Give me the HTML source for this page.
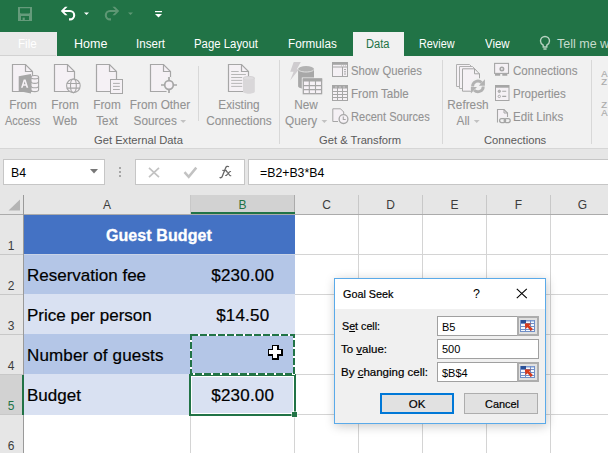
<!DOCTYPE html>
<html><head><meta charset="utf-8">
<style>
*{margin:0;padding:0;box-sizing:border-box}
html,body{width:608px;height:453px;overflow:hidden;background:#fff;font-family:"Liberation Sans",sans-serif;-webkit-font-smoothing:antialiased}
.a{position:absolute}
svg{position:absolute;overflow:visible}
.tab{position:absolute;top:32px;height:24px;font-size:12.5px;color:#fff;line-height:25px;white-space:nowrap}
.rl{position:absolute;font-size:12.2px;color:#939393;-webkit-text-stroke:0.1px #939393;transform:scaleX(0.967);white-space:nowrap;text-align:center;line-height:16px}
.sl{position:absolute;font-size:12.2px;color:#939393;-webkit-text-stroke:0.1px #939393;transform:scaleX(0.951);transform-origin:0 0;white-space:nowrap;line-height:14px}
.gl{position:absolute;font-size:11.2px;color:#5a5a5a;white-space:nowrap;line-height:14px}
.dd{display:inline-block;width:0;height:0;border-left:3px solid transparent;border-right:3px solid transparent;border-top:3px solid #c2c2c2;-webkit-text-stroke:0;margin-left:4px;vertical-align:2px}
.sep{position:absolute;top:60px;width:1px;height:84px;background:#d8d8d8}
.cell{position:absolute;font-size:17px;color:#000;white-space:nowrap;line-height:20px;-webkit-text-stroke:0.2px #000}
.ch{position:absolute;top:195px;height:19px;font-size:12px;color:#3c3c3c;text-align:center;line-height:20px;border-right:1px solid #c8c8c8}
.rh{position:absolute;left:0;width:23px;font-size:12px;color:#3c3c3c;text-align:center;border-bottom:1px solid #c8c8c8}
.rh span{position:absolute;left:0;width:22px;bottom:1px;line-height:14px}
.dl{position:absolute;font-size:11.5px;color:#000;white-space:nowrap;line-height:14px;-webkit-text-stroke:0.2px #000}
.inp{position:absolute;background:#fff;border:1px solid #a0a0a0;font-size:11px;line-height:20px;padding-left:4px;color:#000}
.refb{position:absolute;width:22px;height:20px;background:#e1e1e1;border:2px solid #adadad}
</style></head><body>
<!-- title bar + tabs -->
<div class="a" style="left:0;top:0;width:608px;height:56px;background:#217346"></div>
<!-- QAT -->
<svg style="left:0;top:0" width="200" height="32">
  <rect x="18" y="7" width="14" height="14" fill="#659b7b"/>
  <path d="M20 8.2h10v4.6l-0.8 0.8h-8.4l-0.8-0.8z" fill="#217346"/>
  <rect x="21" y="16" width="8" height="4" fill="#217346"/>
  <rect x="22.6" y="17.6" width="2.2" height="2.4" fill="#659b7b"/>
  <path d="M63 11h7a4.2 4.2 0 0 1 0 8.4h-1" fill="none" stroke="#fff" stroke-width="2.1"/>
  <path d="M60.8 11l4.2-4.2h2.6l-4.2 4.2 4.2 4.2h-2.6z" fill="#fff"/>
  <path d="M84 12.5h5l-2.5 2.5z" fill="#fff"/>
  <path d="M117 11h-7a4.2 4.2 0 0 0 0 8.4h1" fill="none" stroke="#5e9774" stroke-width="2.1"/>
  <path d="M119.2 11l-4.2-4.2h-2.6l4.2 4.2-4.2 4.2h2.6z" fill="#5e9774"/>
  <path d="M128 12.5h5l-2.5 2.5z" fill="#5e9774"/>
  <rect x="155" y="11" width="7" height="1.2" fill="#fff"/>
  <path d="M155 14h7l-3.5 3.5z" fill="#fff"/>
</svg>
<!-- File tab -->
<div class="a" style="left:0;top:32px;width:57px;height:24px;background:#e9e9e9"></div>
<div class="tab" style="left:18px;color:#fff;transform:scaleX(0.93);transform-origin:0 0">File</div>
<div class="a" style="left:0;top:55px;width:56px;height:1px;background:#d2d2d2"></div>
<div class="tab" style="left:74px">Home</div>
<div class="tab" style="left:136px;transform:scaleX(0.926);transform-origin:0 0">Insert</div>
<div class="tab" style="left:194px;transform:scaleX(0.91);transform-origin:0 0">Page Layout</div>
<div class="tab" style="left:288px;transform:scaleX(0.936);transform-origin:0 0">Formulas</div>
<div class="a" style="left:353px;top:32px;width:51px;height:24px;background:#f1f1f1"></div>
<div class="tab" style="left:366px;color:#217346;transform:scaleX(0.89);transform-origin:0 0">Data</div>
<div class="tab" style="left:419px;transform:scaleX(0.867);transform-origin:0 0">Review</div>
<div class="tab" style="left:485px;transform:scaleX(0.915);transform-origin:0 0">View</div>
<svg style="left:538px;top:35px" width="14" height="16">
  <path d="M5.2 12v-1.8C3.6 9.2 2.5 7.8 2.5 6a4.5 4.5 0 0 1 9 0c0 1.8-1.1 3.2-2.7 4.2V12z M5.4 14h3.2" fill="none" stroke="#b8d3c2" stroke-width="1.4"/>
</svg>
<div class="tab" style="left:557px;color:#c6dccd">Tell me w</div>

<!-- ribbon -->
<div class="a" style="left:0;top:56px;width:608px;height:92px;background:#f1f1f1"></div>
<div class="a" style="left:0;top:148px;width:608px;height:1px;background:#d6d6d6"></div>

<!-- big icons -->
<svg style="left:0;top:56px" width="330" height="40">
  <defs>
    <g id="doc"><path d="M0.5 0.5h13l7 7v20h-20z" fill="#f5f1f5" stroke="#a6a6a6" stroke-width="1.2"/><path d="M13.5 0.5v7h7" fill="none" stroke="#a6a6a6" stroke-width="1.2"/></g>
  </defs>
  <!-- access -->
  <use href="#doc" x="12" y="8"/>
  <path d="M18.7 20.3L31 17.9V37.4L18.7 35z" fill="#a6a6a6"/>
  <path fill-rule="evenodd" d="M21 31.8L23.7 23.5h1.9L28.3 31.8h-1.8l-0.6-2h-2.6l-0.6 2zM23.8 28.3h1.7l-0.85-3z" fill="#f5f1f5"/>
  <g fill="#f5f1f5" stroke="#a6a6a6" stroke-width="1.1">
    <path d="M31 21.2v12.6c0 1 1.7 1.8 3.8 1.8s3.8-.8 3.8-1.8V21.2"/>
    <ellipse cx="34.8" cy="21.2" rx="3.8" ry="1.7"/>
    <path d="M31 25.6c0 1 1.7 1.8 3.8 1.8s3.8-.8 3.8-1.8M31 30c0 1 1.7 1.8 3.8 1.8s3.8-.8 3.8-1.8" fill="none"/>
  </g>
  <!-- web -->
  <use href="#doc" x="54" y="8"/>
  <g fill="#f5f1f5" stroke="#a6a6a6" stroke-width="1.1">
    <circle cx="73.4" cy="29.8" r="6.8"/>
    <ellipse cx="73.4" cy="29.8" rx="2.9" ry="6.8" fill="none"/>
    <path d="M66.8 27.5h13.2M66.8 32.1h13.2" fill="none"/>
  </g>
  <!-- text -->
  <use href="#doc" x="96" y="8"/>
  <rect x="110.5" y="23.5" width="12" height="14" fill="#f5f1f5" stroke="#a6a6a6"/>
  <path d="M113 27.4h6.8M113 30.4h6.8M113 33.5h6.8" stroke="#a6a6a6" stroke-width="0.9"/>
  <!-- other sources -->
  <use href="#doc" x="150" y="8"/>
  <g stroke="#f1f1f1" stroke-width="4.5" fill="none">
    <circle cx="169" cy="29" r="4.6"/>
    <path d="M169 21v16M161 29h16"/>
  </g>
  <g stroke="#a6a6a6" stroke-width="1.7" fill="none">
    <circle cx="169" cy="29" r="4.3" fill="#f5f1f5"/>
    <path d="M169 21v3.5M169 33.5v3.5M161 29h3.5M173.5 29h3.5"/>
  </g>
  <!-- existing connections -->
  <use href="#doc" x="228" y="8"/>
  <path d="M231.2 15.5h7.5M231.2 18.5h14.7M231.2 21.5h11M231.2 24.4h11M231.2 27.4h11M231.2 30.4h11" stroke="#b0b0b0" stroke-width="0.9"/>
  <g fill="#d9d7d9" stroke="none">
    <path d="M243 22v13.5c0 1.3 2.6 2.2 5.9 2.2s5.9-.9 5.9-2.2V22z"/>
    <ellipse cx="248.9" cy="22" rx="5.9" ry="2.1" fill="#d0cdd0"/>
    <ellipse cx="248.9" cy="22.3" rx="5" ry="1.5" fill="#dedcde"/>
  </g>
  <!-- new query -->
  <path d="M293.7 6H300.8L296.8 13.2H299L290.2 24.5L293.6 15.8H290.2z" fill="#cfcccf"/>
  <g fill="#a8a8a8">
    <path d="M298.1 13v17.2c0 1.5 3.6 2.6 7.95 2.6s7.95-1.1 7.95-2.6V13z"/>
    <ellipse cx="306.05" cy="13" rx="7.95" ry="3" fill="#b2b2b2"/>
    <path d="M298.1 13.2c0 1.6 3.6 2.8 7.95 2.8s7.95-1.2 7.95-2.8" fill="none" stroke="#e8e8e8" stroke-width="0.9"/>
  </g>
  <rect x="301.8" y="21.5" width="21.3" height="17.7" fill="#f1f1f1"/>
  <rect x="303.3" y="23" width="18.3" height="14.7" fill="#f7f2f7" stroke="#a6a6a6" stroke-width="1.3"/>
  <rect x="302.8" y="22.5" width="19.3" height="3" fill="#a6a6a6"/>
  <path d="M303 29.6h18.6M303 33.6h18.6M309.3 25v12.5M315.5 25v12.5" stroke="#a6a6a6" stroke-width="1.1"/>
</svg>

<div class="rl" style="left:0;top:97px;width:46px">From<br><span style="display:inline-block;transform:scaleX(0.93)">Access</span></div>
<div class="rl" style="left:45px;top:97px;width:40px">From<br>Web</div>
<div class="rl" style="left:87px;top:97px;width:40px">From<br>Text</div>
<div class="rl" style="left:125px;top:97px;width:70px">From Other<br>Sources<i class="dd"></i></div>
<div class="gl" style="left:94px;top:133px">Get External Data</div>
<div class="sep" style="left:198px;top:66px;height:55px"></div>
<div class="rl" style="left:202px;top:97px;width:74px">Existing<br>Connections</div>
<div class="sep" style="left:279px"></div>
<div class="rl" style="left:283px;top:97px;width:46px">New<br>Query<i class="dd"></i></div>

<!-- small buttons get & transform -->
<svg style="left:330px;top:56px" width="280" height="92">
  <!-- show queries -->
  <rect x="2.5" y="6.5" width="15" height="14" fill="#f5f1f5" stroke="#a6a6a6"/>
  <rect x="2.5" y="6.5" width="15" height="2.3" fill="#a6a6a6"/>
  <path d="M2.5 11h15M12.5 11v9.5M14 13.6h2M14 15.8h2M14 18h2" stroke="#a6a6a6"/>
  <path d="M11 9.8h1M13 9.8h1M15 9.8h1" stroke="#b8b8b8" stroke-width="0.8"/>
  <!-- from table -->
  <rect x="2.5" y="29.5" width="15" height="15" fill="#f5f1f5" stroke="#a6a6a6"/>
  <rect x="2.5" y="29.5" width="15" height="3" fill="#a6a6a6"/>
  <path d="M5.5 31h1M9.5 31h1M13.5 31h1" stroke="#f5f1f5" stroke-width="1"/>
  <path d="M2.5 35.5h15M2.5 38.5h15M2.5 41.5h15M7.5 32v12.5M12.5 32v12.5" stroke="#a6a6a6"/>
  <!-- recent sources -->
  <path d="M10.5 52.8v3.2h3.2" fill="none" stroke="#a6a6a6"/>
  <path d="M8 65.5H2.8V52.8h7.7l3.2 3.2v2.2" fill="#f5f1f5" stroke="#a6a6a6"/>
  <circle cx="13.5" cy="63.1" r="4.4" fill="#f5f1f5" stroke="#a6a6a6" stroke-width="1.3"/>
  <path d="M13.3 60.6v2.9h2.4" fill="none" stroke="#a6a6a6" stroke-width="1.1"/>
  <!-- separator right of get&transform at x=442 -->
  <!-- refresh all -->
  <path d="M126.5 8.5h13l4 4v18h-17z" fill="#f5f1f5" stroke="#b0b0b0"/>
  <path d="M129.5 10.5h13l4 4v18h-17z" fill="#f5f1f5" stroke="#b0b0b0"/>
  <path d="M132.5 12.8h12l5 5v17.4h-17z" fill="#f5f1f5" stroke="#a6a6a6"/>
  <path d="M144.5 12.8v5h5" fill="none" stroke="#a6a6a6"/>
  <circle cx="147.9" cy="30.4" r="8.4" fill="#f1f1f1"/>
  <g fill="none" stroke="#b2b2b2" stroke-width="2.9">
    <path d="M142.55 30.4A5.35 5.35 0 0 1 151.6 26.6"/>
    <path d="M153.25 30.4A5.35 5.35 0 0 1 144.2 34.2"/>
  </g>
  <path d="M148.8 29.8H154.9V23.2z M147 31H140.9V37.6z" fill="#b2b2b2"/>
  <!-- connections small -->
  <rect x="164.6" y="7.4" width="13.9" height="10" fill="#f5f1f5" stroke="#a6a6a6" stroke-width="1.1"/>
  <path d="M165 18.9h5.2M172.3 18.9h5" stroke="#a6a6a6" stroke-width="1.6"/>
  <circle cx="171.9" cy="12.9" r="1.7" fill="none" stroke="#a6a6a6" stroke-width="1.6"/>
  <!-- properties -->
  <rect x="165.5" y="29.5" width="13.5" height="15" fill="#f5f1f5" stroke="#a6a6a6"/>
  <rect x="165.5" y="29.5" width="13.5" height="2.2" fill="#a6a6a6"/>
  <circle cx="169.3" cy="35.3" r="1.2" fill="#b8b8b8" stroke="#a6a6a6" stroke-width="0.9"/>
  <circle cx="169.3" cy="40.4" r="1.2" fill="none" stroke="#a6a6a6" stroke-width="0.9"/>
  <path d="M172.2 35.3h4M172.2 40.4h4" stroke="#a6a6a6" stroke-width="1.1"/>
  <!-- edit links -->
  <path d="M167.5 66.5V53.5h6.5l3.5 3.5v4.5" fill="#f5f1f5" stroke="#a6a6a6" stroke-width="1.1"/>
  <path d="M174 53.5v3.5h3.5" fill="none" stroke="#a6a6a6" stroke-width="1"/>
  <rect x="168" y="61" width="13" height="7" fill="#f1f1f1"/>
  <rect x="169.6" y="62.6" width="6" height="4" rx="2" fill="none" stroke="#a6a6a6" stroke-width="1.3"/>
  <rect x="174.2" y="62.6" width="6" height="4" rx="2" fill="none" stroke="#a6a6a6" stroke-width="1.3"/>
  <g font-size="9.5" fill="#aaaaaa" font-family="Liberation Sans" stroke="#aaaaaa" stroke-width="0.15">
  <text x="271.2" y="20.5">A</text>
  <text x="271.2" y="28.8">Z</text>
  <text x="271.2" y="51.5">Z</text>
  <text x="271.2" y="59.8">A</text>
  </g>
</svg>
<div class="sl" style="left:351px;top:64px;transform:scaleX(0.927)">Show Queries</div>
<div class="sl" style="left:351px;top:87px">From Table</div>
<div class="sl" style="left:351px;top:110px;transform:scaleX(0.908)">Recent Sources</div>
<div class="gl" style="left:319px;top:133px">Get &amp; Transform</div>
<div class="sep" style="left:442px"></div>
<div class="rl" style="left:444px;top:97px;width:48px">Refresh<br>All<i class="dd"></i></div>
<div class="sl" style="left:513px;top:64px">Connections</div>
<div class="sl" style="left:513px;top:87px">Properties</div>
<div class="sl" style="left:513px;top:110px">Edit Links</div>
<div class="gl" style="left:484px;top:133px">Connections</div>
<div class="sep" style="left:591px"></div>

<!-- formula bar area -->
<div class="a" style="left:0;top:149px;width:608px;height:46px;background:#e6e6e6"></div>
<div class="a" style="left:3px;top:159px;width:102px;height:26px;background:#fff;border:1px solid #c6c6c6"></div>
<div class="a" style="left:11px;top:165px;font-size:12.3px;line-height:16px;color:#000">B4</div>
<svg style="left:89px;top:168px" width="10" height="6"><path d="M1 1h8l-4 4.5z" fill="#777"/></svg>
<svg style="left:118px;top:166px" width="4" height="12"><rect x="1" y="1" width="2" height="2" fill="#a6a6a6"/><rect x="1" y="5" width="2" height="2" fill="#a6a6a6"/><rect x="1" y="9" width="2" height="2" fill="#a6a6a6"/></svg>
<div class="a" style="left:135px;top:159px;width:110px;height:26px;background:#fff;border:1px solid #c6c6c6"></div>
<svg style="left:145px;top:165px" width="100" height="16">
  <path d="M4 2.8l10 9.4M14 2.8L4 12.2" stroke="#c2c2c2" stroke-width="1.7"/>
  <path d="M39.5 7.2l4.2 4.6 7.6-9.2" fill="none" stroke="#c2c2c2" stroke-width="2.5"/>
  <path d="M84 1.8C82.6 0.9 81.1 1.3 80.5 3.2L77.2 11.6C76.7 12.8 75.6 13.1 74.6 12.3" fill="none" stroke="#666" stroke-width="1.3"/>
  <path d="M77.3 5.4h4.6" stroke="#666" stroke-width="1.1"/>
  <path d="M80.8 6.8c1.5-.6 2 .2 2.6 1.4l1 1.8c.4.7 1 1 1.8.5M86 6.6c-.7-.3-1.3 0-1.9.8l-2.2 2.5c-.5.6-1.1.8-1.7.5" fill="none" stroke="#666" stroke-width="1.1"/>
</svg>
<div class="a" style="left:248px;top:159px;width:370px;height:26px;background:#fff;border:1px solid #c6c6c6"></div>
<div class="a" style="left:260px;top:165px;font-size:12.3px;line-height:16px;color:#000">=B2+B3*B4</div>

<!-- column headers -->
<div class="a" style="left:0;top:195px;width:608px;height:19px;background:#e6e6e6"></div>
<svg style="left:0;top:195px" width="24" height="19"><path d="M20 4.5v11h-11.5z" fill="#b4b4b4"/></svg>
<div class="ch" style="left:0;width:24px;border-right:1px solid #9a9a9a"></div>
<div class="ch" style="left:24px;width:167px">A</div>
<div class="ch" style="left:191px;width:104px;background:#d2d2d2;color:#217346;border-right:1px solid #ababab">B</div>
<div class="a" style="left:191px;top:212px;width:104px;height:2px;background:#217346"></div>
<div class="ch" style="left:295px;width:64px">C</div>
<div class="ch" style="left:359px;width:64px">D</div>
<div class="ch" style="left:423px;width:64px">E</div>
<div class="ch" style="left:487px;width:64px">F</div>
<div class="ch" style="left:551px;width:64px">G</div>
<div class="a" style="left:0;top:214px;width:608px;height:1px;background:#ababab"></div>

<!-- grid -->
<div class="a" style="left:24px;top:215px;width:584px;height:238px;background:#fff"></div>
<svg style="left:0;top:0" width="608" height="453">
  <g stroke="#d4d4d4" stroke-width="1">
    <path d="M295 254.5h313M295 294.5h313M295 334.5h313M295 374.5h313M295 414.5h313"/>
    <path d="M358.5 215v238M422.5 215v238M486.5 215v238M550.5 215v238M190.5 414v39M294.5 414v39"/>
  </g>
</svg>
<!-- row headers -->
<div class="a" style="left:0;top:215px;width:23px;height:238px;background:#e6e6e6"></div>
<div class="a" style="left:23px;top:195px;width:1px;height:258px;background:#9a9a9a"></div>
<div class="rh" style="top:215px;height:40px"><span>1</span></div>
<div class="rh" style="top:255px;height:40px"><span>2</span></div>
<div class="rh" style="top:295px;height:40px"><span>3</span></div>
<div class="rh" style="top:335px;height:40px"><span>4</span></div>
<div class="rh" style="top:375px;height:40px;background:#d2d2d2;color:#217346"><span>5</span></div>
<div class="a" style="left:22px;top:375px;width:2px;height:40px;background:#217346"></div>
<div class="rh" style="top:415px;height:40px"><span>6</span></div>

<!-- cells -->
<div class="a" style="left:24px;top:215px;width:271px;height:39px;background:#4472c4"></div>
<div class="a" style="left:24px;top:254px;width:271px;height:40px;background:#b4c6e7"></div>
<div class="a" style="left:24px;top:294px;width:271px;height:40px;background:#d9e1f2"></div>
<div class="a" style="left:24px;top:334px;width:271px;height:40px;background:#b4c6e7"></div>
<div class="a" style="left:24px;top:374px;width:271px;height:41px;background:#d9e1f2"></div>
<div class="a" style="left:24px;top:254px;width:271px;height:1px;background:#c9d3e6"></div>
<div class="cell" style="left:24px;top:226px;width:271px;text-align:center;font-weight:bold;color:#fff;font-size:16px;letter-spacing:0.1px;-webkit-text-stroke:0.3px #fff;padding-right:1px">Guest Budget</div>
<div class="cell" style="left:27px;top:266px">Reservation fee</div>
<div class="cell" style="left:190px;top:266px;width:104px;text-align:center;letter-spacing:0.2px;padding-left:1.5px">$230.00</div>
<div class="cell" style="left:27px;top:306px">Price per person</div>
<div class="cell" style="left:190px;top:306px;width:104px;text-align:center;letter-spacing:0.2px;padding-left:1.5px">$14.50</div>
<div class="cell" style="left:27px;top:346px;letter-spacing:0.15px">Number of guests</div>
<div class="cell" style="left:27px;top:386px">Budget</div>
<div class="cell" style="left:190px;top:386px;width:104px;text-align:center;letter-spacing:0.2px;padding-left:1.5px">$230.00</div>

<!-- marquee B4 -->
<svg style="left:0;top:0" width="608" height="453">
  <!-- B5 selection -->
  <rect x="190" y="375" width="105" height="40" fill="none" stroke="#217346" stroke-width="2"/>
  <rect x="191.5" y="376.5" width="102" height="37" fill="none" stroke="#fff" stroke-width="1"/>
  <rect x="191" y="335" width="103" height="39" fill="none" stroke="#fff" stroke-width="2"/>
  <rect x="191" y="335" width="103" height="39" fill="none" stroke="#217346" stroke-width="2" stroke-dasharray="7 2"/>
  <rect x="291.5" y="411.5" width="6" height="6" fill="#fff"/><rect x="292" y="412" width="5" height="5" fill="#217346"/>
  <!-- cursor -->
  <g shape-rendering="crispEdges"><rect x="272" y="345" width="7" height="15" fill="#000"/><rect x="268" y="349" width="15" height="7" fill="#000"/><rect x="273" y="346" width="4" height="12" fill="#fff"/><rect x="269" y="350" width="12" height="4" fill="#fff"/></g>
</svg>

<!-- dialog -->
<div class="a" style="left:334px;top:278px;width:212px;height:146px;background:#f0f0f0;border:1px solid #5aaae9;box-shadow:1px 2px 10px rgba(0,0,0,0.22)"></div>
<div class="a" style="left:335px;top:279px;width:210px;height:30px;background:#fff"></div>
<div class="dl" style="left:343px;top:287px;transform:scaleX(0.94);transform-origin:0 0">Goal Seek</div>
<div class="dl" style="left:473px;top:287px;font-size:12.5px;-webkit-text-stroke:0">?</div>
<svg style="left:516px;top:288px" width="12" height="11"><path d="M0.8 0.8l10 9.4M10.8 0.8l-10 9.4" stroke="#000" stroke-width="1.1"/></svg>
<div class="dl" style="left:341.5px;top:319px;transform:scaleX(0.93);transform-origin:0 0">S<u>e</u>t cell:</div>
<div class="dl" style="left:341px;top:342px">To <u>v</u>alue:</div>
<div class="dl" style="left:341px;top:365px">By <u>c</u>hanging cell:</div>
<div class="inp" style="left:437px;top:316px;width:81px;height:20px">B5</div>
<div class="refb" style="left:517px;top:316px"></div>
<div class="inp" style="left:437px;top:339px;width:102px;height:20px;line-height:19px">500</div>
<div class="inp" style="left:437px;top:362px;width:81px;height:20px">$B$4</div>
<div class="refb" style="left:517px;top:362px"></div>
<svg style="left:0;top:0" width="608" height="453">
  <defs>
    <g id="refi">
      <rect x="0" y="0" width="15" height="12" fill="#f4f8fd"/>
      <rect x="0" y="0" width="6" height="3" fill="#2a4f96"/>
      <rect x="6" y="0" width="9" height="1.5" fill="#7d9bd3"/>
      <path d="M0 3.5h15M0 6.5h15M0 9.5h15M0 11.5h15M0.5 0v12M5.5 3v9M10.5 0v12M14.5 0v12" stroke="#6f8fc8" stroke-width="1"/>
      <path d="M4.8 3.2l6.4 0.3-1.9 1.9 3.6 3.5-2 2-3.5-3.6-1.9 1.9z" fill="#d63a1c"/>
    </g>
  </defs>
  <use href="#refi" x="520" y="320"/>
  <use href="#refi" x="520" y="366"/>
</svg>
<div class="a" style="left:380px;top:393px;width:74px;height:21px;background:#e1e1e1;border:2px solid #0078d7"></div>
<div class="dl" style="left:380px;top:397px;width:74px;text-align:center">OK</div>
<div class="a" style="left:464px;top:393px;width:74px;height:21px;background:#e1e1e1;border:1px solid #adadad"></div>
<div class="dl" style="left:465px;top:397px;width:74px;text-align:center;transform:scaleX(0.95)">Cancel</div>
</body></html>
